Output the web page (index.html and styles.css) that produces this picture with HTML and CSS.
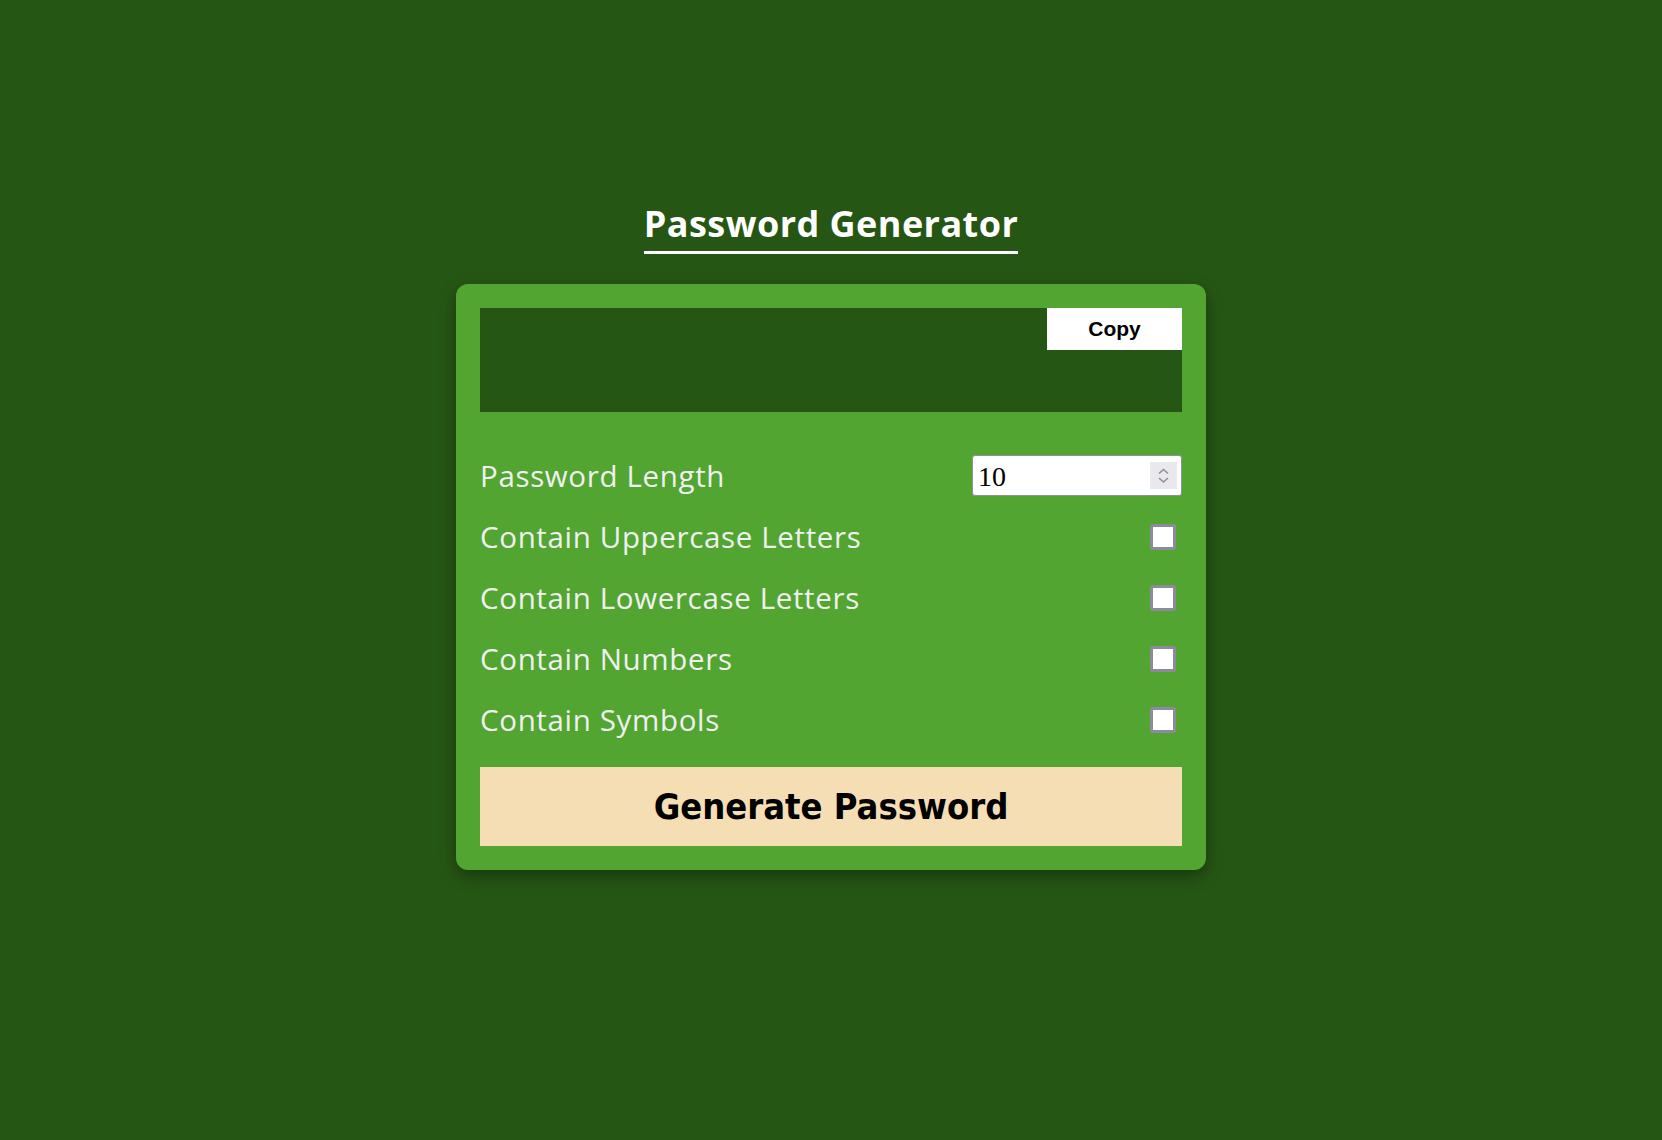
FILE: index.html
```html
<!DOCTYPE html>
<html>
<head>
<meta charset="utf-8">
<link rel="stylesheet" href="styles.css">
</head>
<body>
<main class="page">
  <h1 class="title">Password Generator</h1>
  <section class="card">
    <div class="result">
      <span class="result-text"></span>
      <button class="copy-btn">Copy</button>
    </div>
    <div class="options">
      <div class="row">
        <label class="label">Password Length</label>
        <div class="length-field">
          <input class="length-input" type="number" value="10" min="4" max="20">
          <span class="spin">
            <svg width="27" height="27" viewBox="0 0 27 27"><path d="M9 11.5 L13.5 7.5 L18 11.5" fill="none" stroke="#8f8f9d" stroke-width="1.6"/><path d="M9 16 L13.5 20 L18 16" fill="none" stroke="#8f8f9d" stroke-width="1.6"/></svg>
          </span>
        </div>
      </div>
      <div class="row">
        <label class="label">Contain Uppercase Letters</label>
        <input class="check" type="checkbox">
      </div>
      <div class="row">
        <label class="label">Contain Lowercase Letters</label>
        <input class="check" type="checkbox">
      </div>
      <div class="row">
        <label class="label">Contain Numbers</label>
        <input class="check" type="checkbox">
      </div>
      <div class="row">
        <label class="label">Contain Symbols</label>
        <input class="check" type="checkbox">
      </div>
    </div>
    <button class="generate-btn">Generate Password</button>
  </section>
</main>
</body>
</html>
```
FILE: styles.css
```css
* { box-sizing: border-box; }
html, body { margin: 0; padding: 0; }
body {
  background: #265614;
  min-height: 1140px;
  font-family: "Open Sans", "Noto Sans", sans-serif;
  color: #f0f0f0;
}
.page {
  display: flex;
  flex-direction: column;
  align-items: center;
  padding-top: 199px;
}
.title {
  margin: 0 0 30px;
  font-family: "Open Sans", sans-serif;
  font-weight: 700;
  font-size: 36px;
  letter-spacing: 0.45px;
  line-height: 50px;
  color: #ffffff;
  border-bottom: 3px solid #ffffff;
  padding-bottom: 2px;
}
.card {
  width: 750px;
  background: #53a531;
  border-radius: 12px;
  padding: 24px;
  box-shadow: 0 6px 16px rgba(0, 0, 0, 0.35);
  display: flex;
  flex-direction: column;
}
.result {
  height: 104px;
  background: #265614;
  display: flex;
  justify-content: flex-end;
  align-items: flex-start;
}
.copy-btn {
  width: 135px;
  height: 42px;
  border: none;
  background: #ffffff;
  color: #000;
  font-family: "Liberation Sans", Arial, sans-serif;
  font-weight: 700;
  font-size: 21px;
  padding: 0;
}
.options {
  padding-top: 43px;
  display: flex;
  flex-direction: column;
  gap: 20px;
}
.row {
  display: flex;
  justify-content: space-between;
  align-items: center;
  height: 41px;
}
.label {
  font-size: 29.5px;
  font-weight: 400;
  color: #f0f0f0;
  letter-spacing: 0.65px;
}
.length-field {
  position: relative;
  width: 210px;
  height: 41px;
}
.length-input {
  width: 210px;
  height: 41px;
  border: 1px solid #8f8f9d;
  border-radius: 3px;
  font-family: "Liberation Serif", serif;
  font-size: 28px;
  padding: 2px 6px 0 5px;
  background: #fff;
  color: #000;
  -moz-appearance: textfield;
}
.length-input::-webkit-inner-spin-button,
.length-input::-webkit-outer-spin-button {
  -webkit-appearance: none;
  margin: 0;
}
.spin {
  position: absolute;
  right: 5px;
  top: 7px;
  width: 27px;
  height: 27px;
  background: #e9e9ed;
  display: block;
}
.spin svg { display: block; }
.check {
  appearance: none;
  -webkit-appearance: none;
  width: 26px;
  height: 26px;
  margin: 0 6px 0 0;
  background: #ffffff;
  border: 3px solid #8e8a9e;
  border-radius: 3px;
}
.generate-btn {
  margin-top: 27px;
  height: 79px;
  border: none;
  background: #f5deb3;
  color: #000;
  font-family: "DejaVu Sans", sans-serif;
  font-stretch: condensed;
  font-weight: 700;
  font-size: 36px;
}
```
